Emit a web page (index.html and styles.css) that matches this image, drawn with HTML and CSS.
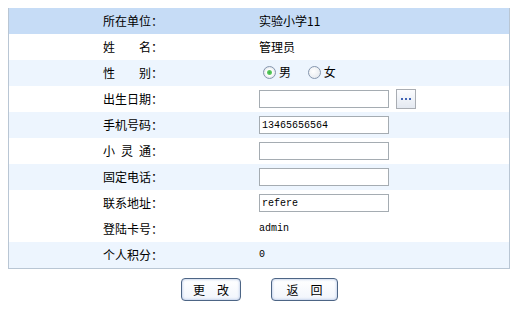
FILE: index.html
```html
<!DOCTYPE html>
<html lang="zh-CN">
<head>
  <meta charset="UTF-8" />
  <title>个人信息</title>
  <link rel="stylesheet" href="styles.css">
</head>
<body>
  <table class="info-table">
    <tr class="row-head">
      <td class="label"><span>所在单位：</span></td>
      <td class="value">实验小学11</td>
    </tr>
    <tr>
      <td class="label"><span>姓　　名：</span></td>
      <td class="value">管理员</td>
    </tr>
    <tr class="row-alt">
      <td class="label"><span>性　　别：</span></td>
      <td class="value">
        <label class="radio"><input type="radio" name="sex" checked />男</label>
        <label class="radio"><input type="radio" name="sex" />女</label>
      </td>
    </tr>
    <tr>
      <td class="label"><span>出生日期：</span></td>
      <td class="value">
        <input class="text-input" type="text" />
        <button class="date-btn" type="button">
          <svg width="10" height="2" viewBox="0 0 10 2"><rect x="0" y="0" width="2" height="2" fill="#3f63b5"/><rect x="4" y="0" width="2" height="2" fill="#3f63b5"/><rect x="8" y="0" width="2" height="2" fill="#3f63b5"/></svg>
        </button>
      </td>
    </tr>
    <tr class="row-alt">
      <td class="label"><span>手机号码：</span></td>
      <td class="value"><input class="text-input" type="text" value="13465656564" /></td>
    </tr>
    <tr>
      <td class="label"><span>小&ensp;灵&ensp;通：</span></td>
      <td class="value"><input class="text-input" type="text" /></td>
    </tr>
    <tr class="row-alt">
      <td class="label"><span>固定电话：</span></td>
      <td class="value"><input class="text-input" type="text" /></td>
    </tr>
    <tr>
      <td class="label"><span>联系地址：</span></td>
      <td class="value"><input class="text-input" type="text" value="refere" /></td>
    </tr>
    <tr>
      <td class="label"><span>登陆卡号：</span></td>
      <td class="value mono">admin</td>
    </tr>
    <tr class="row-alt">
      <td class="label"><span>个人积分：</span></td>
      <td class="value mono">0</td>
    </tr>
  </table>

  <div class="actions">
    <button class="btn btn-edit" type="button">更&emsp;改</button>
    <button class="btn btn-back" type="button">返&emsp;回</button>
  </div>
</body>
</html>
```

FILE: styles.css
```css
body {
  margin: 8px 0 0 8px;
  font-family: "Noto Sans CJK SC", "DejaVu Sans", sans-serif;
  font-size: 12px;
  color: #000;
  background: #fff;
}

.info-table {
  width: 502px;
  border-collapse: collapse;
  border-left: 1px solid #b9c6d4;
  border-right: 1px solid #b9c6d4;
  border-bottom: 1px solid #b9c6d4;
}

.info-table td {
  height: 26px;
  padding: 0;
  vertical-align: middle;
  line-height: 14px;
}

.row-head td {
  background: #c6dcf6;
}

.row-alt td {
  background: #edf5fe;
}

.label {
  width: 248px;
  text-align: center;
}

.label span {
  display: inline-block;
  width: 60px;
  text-align: left;
}

.value {
  padding-left: 2px !important;
}

.mono {
  font-family: "Liberation Mono", monospace;
  font-size: 10px;
}

.text-input {
  width: 130px;
  height: 18px;
  box-sizing: border-box;
  border: 1px solid #a5acb2;
  padding: 1px 2px 0;
  font-family: "Liberation Mono", monospace;
  font-size: 10px;
  vertical-align: middle;
  margin: 0;
}

.date-btn {
  width: 20px;
  height: 20px;
  margin: 0 0 0 4px;
  padding: 0;
  border: 1px solid #a9adb3;
  background: linear-gradient(#fbfcfe, #e4e9f1);
  vertical-align: middle;
  display: inline-flex;
  align-items: center;
  justify-content: center;
}

.radio {
  display: inline-flex;
  align-items: center;
  margin-left: 4px;
  margin-right: 10px;
}

.radio input {
  appearance: none;
  width: 13px;
  height: 13px;
  margin: 0 3px 0 0;
  border: 1px solid #8596ae;
  border-radius: 50%;
  background: radial-gradient(circle at 40% 40%, #ffffff, #dfe4ea);
  box-sizing: border-box;
  position: relative;
}

.radio input:checked {
  background: radial-gradient(circle, #39b34a 0, #5fcb63 2px, #ffffff 3px, #dfe4ea 6px);
}

.actions {
  display: flex;
  gap: 30px;
  margin-top: 9px;
  padding-left: 173px;
}

.btn {
  height: 23px;
  padding: 0;
  border: 1px solid #4d6585;
  border-radius: 4px;
  background: linear-gradient(#ffffff, #f1f5fc);
  box-shadow: inset 0 0 3px #9fb5de;
  font-family: "Noto Sans CJK SC", sans-serif;
  font-size: 12px;
  color: #000;
}

.btn-edit {
  width: 60px;
}

.btn-back {
  width: 67px;
}
```
